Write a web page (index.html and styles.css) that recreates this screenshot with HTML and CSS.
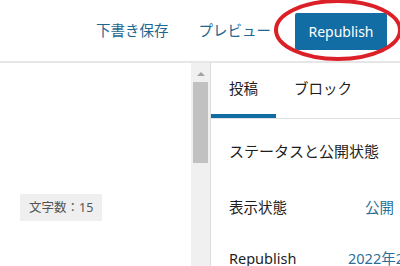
FILE: index.html
```html
<!DOCTYPE html>
<html lang="ja">
<head>
<meta charset="UTF-8" />
<meta name="viewport" content="width=device-width, initial-scale=1" />
<title>投稿を編集</title>
<link rel="stylesheet" href="styles.css">
</head>
<body>
  <div class="header">
    <a class="header-link draft">下書き保存</a>
    <a class="header-link">プレビュー</a>
    <button class="publish-btn">Republish</button>
    <svg class="highlight" width="132" height="66" viewBox="0 0 132 66">
      <ellipse cx="66" cy="32" rx="62" ry="29" fill="none" stroke="#dc2027" stroke-width="4" />
    </svg>
  </div>
  <div class="main">
    <div class="editor">
      <div class="word-count">文字数：15</div>
    </div>
    <div class="scrollbar">
      <div class="scroll-arrow"></div>
      <div class="scroll-thumb"></div>
    </div>
    <div class="sidebar">
      <div class="tabs">
        <div class="tab active">投稿</div>
        <div class="tab">ブロック</div>
      </div>
      <div class="panel">
        <div class="panel-title">ステータスと公開状態</div>
        <div class="row">
          <span class="row-label">表示状態</span>
          <span class="row-value visibility">公開</span>
        </div>
        <div class="row">
          <span class="row-label">Republish</span>
          <span class="row-value date">2022年2月</span>
        </div>
      </div>
    </div>
  </div>
</body>
</html>
```

FILE: styles.css
```css
/* Base */
* {
  box-sizing: border-box;
}
body {
  margin: 0;
  width: 400px;
  height: 266px;
  overflow: hidden;
  background: #fff;
  font-family: "Noto Sans", "Noto Sans CJK JP", sans-serif;
  color: #1e1e1e;
}

/* Top bar */
.header {
  position: relative;
  height: 63px;
  border-bottom: 2px solid #e6e6e6;
  display: flex;
  justify-content: flex-end;
  align-items: center;
  padding: 0 13px 2px 0;
}
.header-link {
  font-size: 14.5px;
  color: #1f6790;
  margin-right: 24px;
  white-space: nowrap;
}
.header-link.draft {
  margin-right: 30px;
}
.publish-btn {
  background: #116da4;
  color: #fff;
  border: none;
  border-radius: 2px;
  width: 92px;
  height: 37px;
  font-family: "Noto Sans", sans-serif;
  font-size: 14px;
  padding: 0;
  margin-top: 4px;
}
.highlight {
  position: absolute;
  left: 272px;
  top: -2px;
}

/* Content area */
.main {
  display: flex;
  height: 203px;
}
.editor {
  flex: none;
  width: 191px;
  padding: 131px 0 0 20px;
}
.word-count {
  display: inline-block;
  background: #efefef;
  color: #555;
  font-size: 12.5px;
  line-height: 27px;
  padding: 0 9px;
}
.scrollbar {
  flex: none;
  width: 19px;
  background: #f0f0f0;
  padding: 9px 2px 0 2px;
}
.scroll-arrow {
  width: 0;
  height: 0;
  margin: 0 auto 6px;
  border-left: 4px solid transparent;
  border-right: 4px solid transparent;
  border-bottom: 4px solid #a3a3a3;
}
.scroll-thumb {
  height: 81px;
  background: #c1c1c1;
}
.sidebar {
  flex: 1;
  min-width: 0;
  overflow: hidden;
  border-left: 1px solid #dcdcdc;
}
.tabs {
  display: flex;
  height: 56px;
  border-bottom: 1px solid #e0e0e0;
}
.tab {
  padding: 0 18px;
  font-size: 14.5px;
  line-height: 50px;
  border-bottom: 4px solid transparent;
}
.tab.active {
  border-bottom-color: #116da4;
}
.panel {
  padding: 20px 0 0 18px;
}
.panel-title {
  font-size: 15px;
  line-height: 24px;
  margin-bottom: 32px;
}
.row {
  display: flex;
  font-size: 14.5px;
  line-height: 24px;
  margin-bottom: 27px;
  white-space: nowrap;
}
.row-label {
  width: 119px;
  flex: none;
}
.row-value {
  color: #2b6f98;
}
.visibility {
  margin-left: 17px;
}
```
